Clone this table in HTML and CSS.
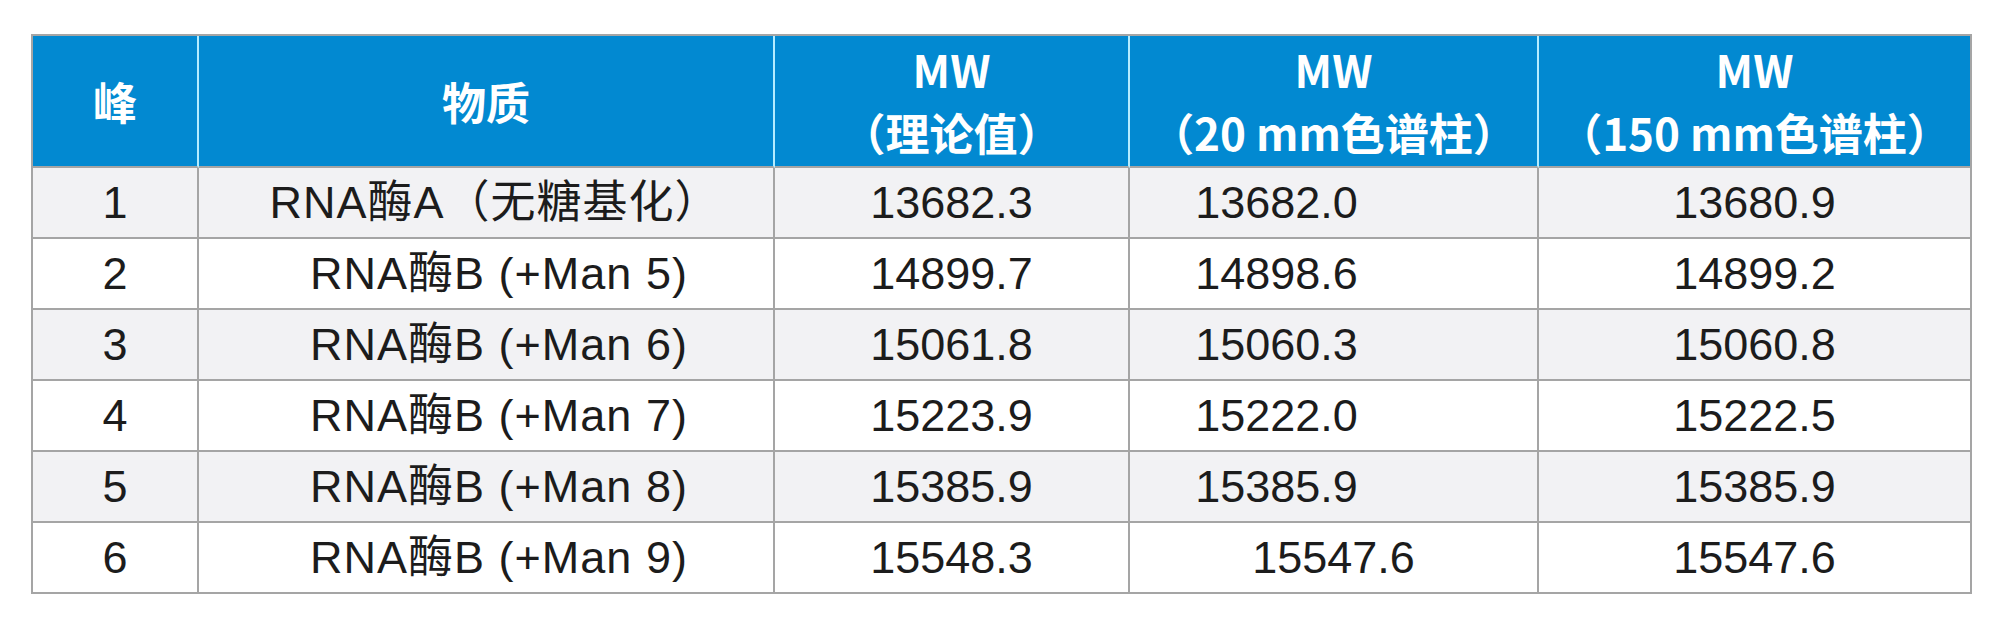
FILE: index.html
```html
<!DOCTYPE html>
<html lang="zh">
<head>
<meta charset="utf-8">
<title>MW table</title>
<link rel="stylesheet" href="styles.css">
</head>
<body>
<table class="mw">
  <colgroup>
    <col class="c1"><col class="c2"><col class="c3"><col class="c4"><col class="c5">
  </colgroup>
  <thead>
    <tr class="head">
      <th>峰</th>
      <th>物质</th>
      <th>MW<br>（理论值）</th>
      <th>MW<br>（20 mm色谱柱）</th>
      <th class="last">MW<br>（150 mm色谱柱）</th>
    </tr>
  </thead>
  <tbody>
    <tr class="odd">
      <td>1</td><td class="name first">RNA酶A（无糖基化）</td><td>13682.3</td><td class="shift">13682.0</td><td>13680.9</td>
    </tr>
    <tr>
      <td>2</td><td class="name sub">RNA酶B (+Man 5)</td><td>14899.7</td><td class="shift">14898.6</td><td>14899.2</td>
    </tr>
    <tr class="odd">
      <td>3</td><td class="name sub">RNA酶B (+Man 6)</td><td>15061.8</td><td class="shift">15060.3</td><td>15060.8</td>
    </tr>
    <tr>
      <td>4</td><td class="name sub">RNA酶B (+Man 7)</td><td>15223.9</td><td class="shift">15222.0</td><td>15222.5</td>
    </tr>
    <tr class="odd">
      <td>5</td><td class="name sub">RNA酶B (+Man 8)</td><td>15385.9</td><td class="shift">15385.9</td><td>15385.9</td>
    </tr>
    <tr>
      <td>6</td><td class="name sub">RNA酶B (+Man 9)</td><td>15548.3</td><td>15547.6</td><td>15547.6</td>
    </tr>
  </tbody>
</table>
</body>
</html>
```

FILE: styles.css
```css
html, body {
  margin: 0;
  padding: 0;
  background: #ffffff;
}

body {
  padding: 34px 0 0 31px;
}

.mw {
  border-collapse: separate;
  border-spacing: 0;
  table-layout: fixed;
  width: 1941px;
  border-left: 2px solid #a5a5a5;
  border-top: 2px solid #a5a5a5;
}

.c1 { width: 166px; }
.c2 { width: 576px; }
.c3 { width: 355px; }
.c4 { width: 409px; }
.c5 { width: 433px; }

.mw th,
.mw td {
  padding: 0;
  text-align: center;
  vertical-align: middle;
  box-sizing: border-box;
}

.head {
  height: 132px;
}

.mw th {
  background: #0289d1;
  color: #ffffff;
  font-family: "Noto Sans CJK SC", "Noto Sans", sans-serif;
  font-weight: 700;
  font-size: 44px;
  line-height: 63px;
  border-right: 2px solid #b4ecff;
  border-bottom: 2px solid #a5a5a5;
}

.mw th.last {
  border-right: 2px solid #a5a5a5;
}

.mw tbody tr {
  height: 71px;
  background: #ffffff;
}

.mw tbody tr.odd {
  background: #f2f2f4;
}

.mw td {
  font-family: "Liberation Sans", "Noto Sans CJK SC", sans-serif;
  font-size: 45px;
  line-height: 52px;
  color: #1c1c1c;
  border-right: 2px solid #a5a5a5;
  border-bottom: 2px solid #a5a5a5;
}

.mw td.name {
  letter-spacing: 1px;
}

.mw td.first {
  padding-left: 18px;
}

.mw td.sub {
  padding-left: 26px;
}

.mw td.shift {
  padding-right: 114px;
}
```
